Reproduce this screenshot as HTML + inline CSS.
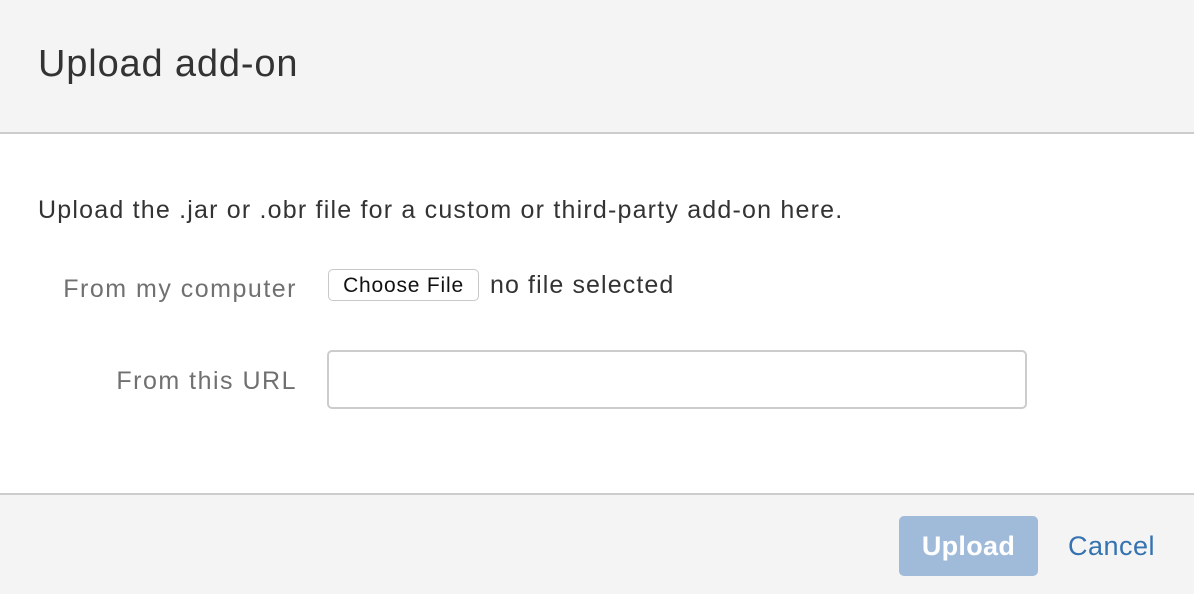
<!DOCTYPE html>
<html><head><style>
body{margin:0;width:1194px;height:592px;overflow:hidden;font-family:"Liberation Sans",Arial,sans-serif;background:#fff;position:relative}
.hdr{position:absolute;left:0;top:0;width:1194px;height:132px;background:#f4f4f4;border-bottom:2px solid #ccc}
.hdr h1{position:absolute;left:38px;top:42px;margin:0;font-size:38px;letter-spacing:0.85px;font-weight:normal;color:#333;line-height:44px}
.t{position:absolute;white-space:nowrap;line-height:30px}
.lbl{position:absolute;white-space:nowrap;line-height:30px;right:897px;font-size:25px;letter-spacing:1.5px;color:#707070}
.ftr{position:absolute;left:0;top:493px;width:1194px;height:99px;background:#f4f4f4;border-top:2px solid #ccc}
</style></head><body>
<div class="hdr"><h1>Upload add-on</h1></div>
<div class="t" style="left:38px;top:195px;font-size:25px;letter-spacing:1.2px;color:#333">Upload the .jar or .obr file for a custom or third-party add-on here.</div>
<div class="lbl" style="top:274px">From my computer</div>
<div style="position:absolute;left:328px;top:269px;width:151px;height:32px;border:1px solid #c8c8c8;border-radius:5px;background:#fff;box-sizing:border-box;font-size:21px;letter-spacing:0.8px;color:#111;text-align:center;line-height:31px">Choose File</div>
<div class="t" style="left:490px;top:270px;font-size:25px;letter-spacing:1.1px;color:#333">no file selected</div>
<div class="lbl" style="top:366px">From this URL</div>
<div style="position:absolute;left:327px;top:350px;width:700px;height:59px;border:2px solid #ccc;border-radius:5px;box-sizing:border-box;background:#fff"></div>
<div class="ftr"></div>
<div style="position:absolute;left:899px;top:516px;width:139px;height:60px;background:#9fbbd9;border-radius:5px;color:#fff;font-weight:bold;font-size:27px;letter-spacing:0.3px;text-align:center;line-height:60px">Upload</div>
<div class="t" style="left:1068px;top:531px;font-size:27px;letter-spacing:0.5px;color:#3572b0">Cancel</div>
</body></html>
